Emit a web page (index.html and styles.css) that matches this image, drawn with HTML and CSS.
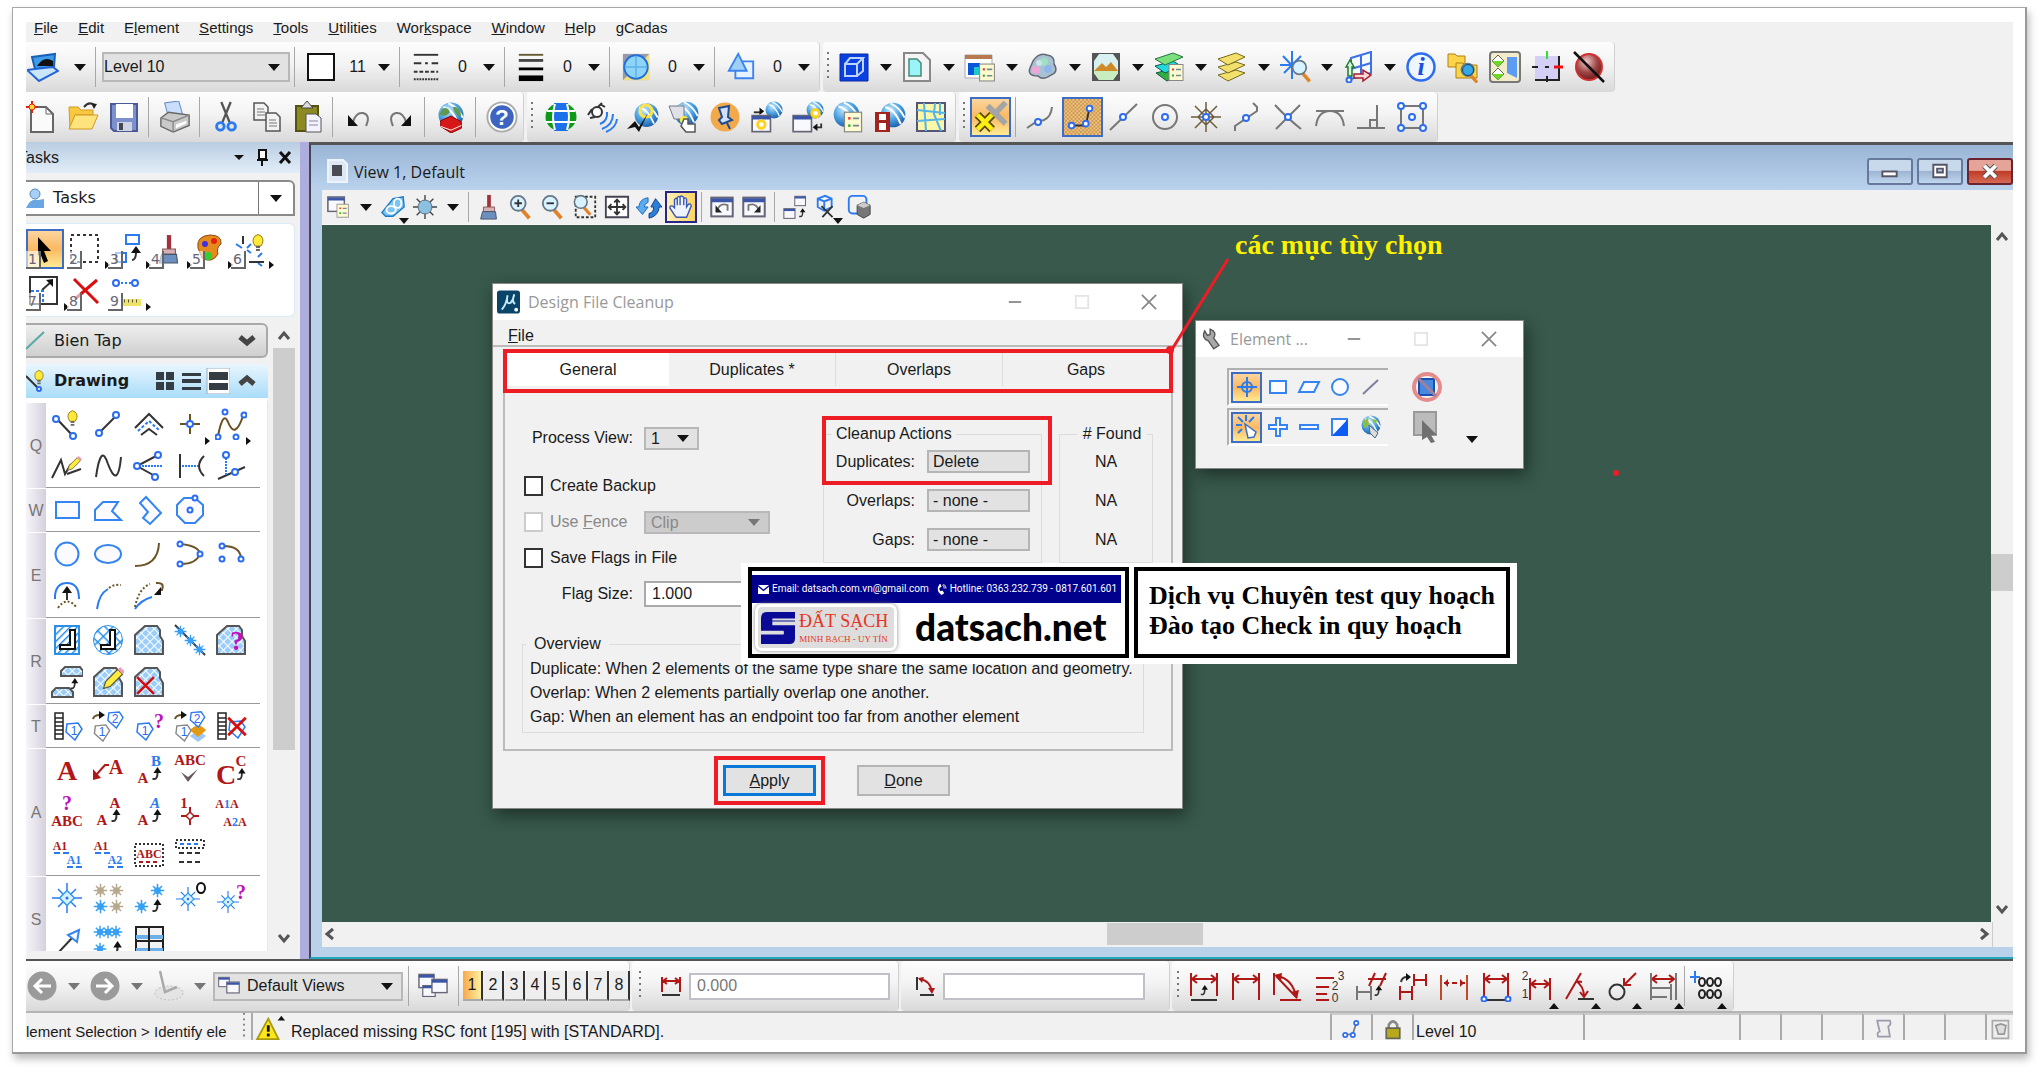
FILE: index.html
```html
<!DOCTYPE html>
<html lang="vi">
<head>
<meta charset="utf-8">
<title>View 1, Default</title>
<link rel="stylesheet" href="styles.css">
</head>
<body>
<svg class="sprite" aria-hidden="true">
  <defs>
    <linearGradient id="gold" x1="0" y1="0" x2="0" y2="1"><stop offset="0" stop-color="#fff3a8"/><stop offset="1" stop-color="#f6b73c"/></linearGradient>
    <radialGradient id="sea" cx=".4" cy=".3" r=".8"><stop offset="0" stop-color="#c8ecff"/><stop offset=".5" stop-color="#4aa0e0"/><stop offset="1" stop-color="#0f4f9c"/></radialGradient>
    <radialGradient id="ruby" cx=".4" cy=".3" r=".8"><stop offset="0" stop-color="#f3c9c9"/><stop offset=".5" stop-color="#a04848"/><stop offset="1" stop-color="#5e0f0f"/></radialGradient>
    <pattern id="hatch" width="6" height="6" patternUnits="userSpaceOnUse" patternTransform="rotate(45)"><rect width="6" height="6" fill="#9acdf9"/><path d="M0 0H6M0 0V6" stroke="#fff" stroke-width="2"/></pattern>
    <pattern id="hatch2" width="8" height="8" patternUnits="userSpaceOnUse" patternTransform="rotate(45)"><rect width="8" height="8" fill="#fff"/><path d="M0 0H8M0 0V8" stroke="#2a8fe8" stroke-width="3"/></pattern>
    <pattern id="hatch3" width="5" height="5" patternUnits="userSpaceOnUse" patternTransform="rotate(45)"><rect width="5" height="5" fill="#fff"/><path d="M0 0V5" stroke="#2a8fe8" stroke-width="3"/></pattern>
    <pattern id="dots" width="4" height="4" patternUnits="userSpaceOnUse"><circle cx="1" cy="1" r=".7" fill="#554"/><circle cx="3" cy="3" r=".7" fill="#554"/></pattern>
  </defs>
  <symbol id="globe" viewBox="0 0 20 20"><circle cx="10" cy="10" r="9.500" fill="url(#sea)"/><path d="M4 4Q11 5 16 17M8 1Q15 4 19 12" fill="none" stroke="#fff" stroke-width="1.500"/></symbol>
  <symbol id="star" viewBox="0 0 20 20"><path class="b thin" d="M10 0V20M0 10H20M4 4L16 16M16 4L4 16"/><path d="M10 5L15 10L10 15L5 10Z" fill="#d7f0ff" stroke="#2b9bf0"/><circle cx="10" cy="10" r="1" fill="#2b6cf0"/></symbol>
  <symbol id="burst" viewBox="0 0 20 20"><path d="M10 1V19M1 10H19M4 4L16 16M16 4L4 16" stroke="currentColor" stroke-width="2"/><circle cx="10" cy="10" r="4.500" fill="currentColor"/></symbol>
  <symbol id="list" viewBox="0 0 16 18"><rect x="1" y="1" width="14" height="16" fill="#fffbd0" stroke="#888"/><path d="M4 6H6" stroke="#e33" stroke-width="2"/><path d="M4 12H6" stroke="#3a3" stroke-width="2"/><path d="M8 6H13M8 12H13" stroke="#789" stroke-width="1.500"/></symbol>
  <symbol id="win" viewBox="0 0 18 16"><rect x="1" y="1" width="16" height="14" fill="#f8f8ff" stroke="#667" stroke-width="1.500"/><path d="M1 3H17" stroke="#3b56a8" stroke-width="3"/></symbol>
  <symbol id="cur" viewBox="0 0 12 14"><path class="k" d="M2 12H4Q7 12 7 5"/><path d="M7 0L11 6H3Z" fill="#111"/></symbol>
  <symbol id="bulb" viewBox="0 0 12 18"><path d="M3 12Q-1 6 3 2Q6-1 9 2Q13 6 9 12Z" fill="#ffe93b" stroke="#9a7c10"/><path d="M4 13H8M4 16H8" stroke="#666" stroke-width="2"/></symbol>
  <symbol id="pencil" viewBox="0 0 20 20"><path d="M2 18L4 12L14 2L18 6L8 16Z" fill="#ffec3d" stroke="#554"/><path d="M14 2L16 0L20 4L18 6Z" fill="#f29ab8"/></symbol>
  <symbol id="cross" viewBox="0 0 20 20"><path d="M2 2L18 18M18 2L2 18" stroke="#d40f0f" stroke-width="2.500"/></symbol>
  <symbol id="tag" viewBox="0 0 18 20"><path d="M2 3L13 2L17 8L10 19L1 11Z" fill="#fff" stroke="currentColor" stroke-width="1.500"/></symbol>
  <symbol id="ladder" viewBox="0 0 10 28"><path d="M1 1H9V27H1ZM1 6H9M1 10H9M1 14H9M1 18H9M1 22H9" fill="#fff" stroke="#222" stroke-width="1.500"/></symbol>
  <symbol id="lens" viewBox="0 0 28 28"><path d="M15 17L23 26" stroke="#e08228" stroke-width="4"/><circle cx="11" cy="10" r="8" fill="#d9f2ff" stroke="#678" stroke-width="2"/></symbol>
  <symbol id="brush" viewBox="0 0 28 28"><path d="M12 1H16V14H12Z" fill="#a3303a"/><path d="M8 14H20V19H8Z" fill="#d6b0b4" stroke="#855"/><path d="M7 19H21L22 27H5Z" fill="#6d8fc0" stroke="#456"/></symbol>
  <symbol id="grip" viewBox="0 0 4 30"><path d="M2 0V30" stroke="#777" stroke-width="2" stroke-dasharray="2 4"/></symbol>
</svg>

<main class="sheet">
<div class="app">
  <nav class="menubar">
    <a href="#"><u>F</u>ile</a><a href="#"><u>E</u>dit</a><a href="#">E<u>l</u>ement</a><a href="#"><u>S</u>ettings</a><a href="#"><u>T</u>ools</a><a href="#"><u>U</u>tilities</a><a href="#">Wor<u>k</u>space</a><a href="#"><u>W</u>indow</a><a href="#"><u>H</u>elp</a><a href="#">gCadas</a>
  </nav>

  <div class="toolrow">
    <div class="seg first">
      <button class="attr-icon" aria-label="Active level"><svg viewBox="0 0 32 32"><path d="M5 6L28 3L27 16L8 18Z" fill="#3d9be8" stroke="#175fb8" stroke-width="2"/><path d="M10 15Q17 4 26 10V15Z" fill="#111"/><path d="M0 19L12 30L31 20L26 16L8 18Z" fill="#cbe6fb" stroke="#2466d8" stroke-width="2"/></svg></button>
      <i class="caret wide"></i>
      <span class="sep"></span>
      <span class="select level"><select aria-label="Level"><option>Level 10</option></select></span>
      <span class="sep"></span>
      <div class="attr"><span class="swatch"></span><span>11</span><i class="caret"></i></div>
      <span class="sep"></span>
      <div class="attr"><svg viewBox="0 0 28 32"><path class="k" d="M1 3H27"/><path class="k" stroke-dasharray="8 4 3 4" d="M1 12H27"/><path class="k" stroke-dasharray="4 2" d="M1 21H27"/><path class="k" stroke-dasharray="2 1" d="M1 29H27"/></svg><span>0</span><i class="caret"></i></div>
      <span class="sep"></span>
      <div class="attr"><svg viewBox="0 0 28 32"><path d="M1 3H27" stroke="#665a30" stroke-width="2"/><path d="M1 9H27" stroke="#444" stroke-width="3"/><path d="M1 18H27" stroke="#000" stroke-width="3"/><path d="M1 28H27" stroke="#000" stroke-width="6"/></svg><span>0</span><i class="caret"></i></div>
      <span class="sep"></span>
      <div class="attr"><svg viewBox="0 0 28 32"><path d="M0 2H28V30H0Z" fill="#99a"/><path d="M28 2V30H0Z" fill="#f3df83"/><circle cx="14" cy="16" r="12.500" fill="#8ed4f8" stroke="#1c6fd8" stroke-width="2"/><path d="M14 4V28M2 16H26" stroke="#5cb0e8" stroke-width="1.500"/></svg><span>0</span><i class="caret"></i></div>
      <span class="sep"></span>
      <div class="attr"><svg viewBox="0 0 28 32"><path d="M12 10H27V28H8V20" fill="#e6f2ff" stroke="#3b83ee" stroke-width="2"/><path d="M11 2L20 20H1Z" fill="#9fd0fa" stroke="#3b83ee" stroke-width="2"/></svg><span>0</span><i class="caret"></i></div>
    </div>
    <div class="seg split">
      <svg class="grip"><use href="#grip"/></svg>
      <button aria-label="Models"><svg viewBox="0 0 32 32"><path d="M2 3H30V30H2Z" fill="#0a3fe0" stroke="#0828a0"/><path d="M7 13H19V25H7ZM7 13L12 7H25L19 13M25 7V20L19 25" fill="none" stroke="#bcd4ff" stroke-width="2"/></svg></button><i class="caret"></i>
      <button aria-label="References"><svg viewBox="0 0 32 32"><path d="M3 2H22L29 9V30H3Z" fill="#f4f4f4" stroke="#888" stroke-width="2"/><path d="M8 8H16L20 12V25H8Z" fill="#9af4f8" stroke="#487" stroke-width="1.500"/></svg></button><i class="caret"></i>
      <button aria-label="Raster manager"><svg viewBox="0 0 32 32"><path d="M1 4H28V27H1Z" fill="#fff" stroke="#aaa"/><path d="M1 4H28V8H1Z" fill="#b77a50"/><path d="M4 12H16V24H4Z" fill="#0a55d8"/><path d="M10 16H17V24H10Z" fill="#1cc8c8"/><use href="#list" x="14" y="12" width="18" height="19"/></svg></button><i class="caret"></i>
      <button aria-label="Point clouds"><svg viewBox="0 0 32 32"><path d="M6 10Q12 1 20 4Q28 5 27 13Q32 21 24 24Q16 30 11 25Q0 25 3 17Z" fill="#a7c3cf" stroke="#667" stroke-width="1.500"/><circle cx="9" cy="19" r="4" fill="#f0a5d8"/><circle cx="17" cy="11" r="4" fill="#9fe0c0"/><circle cx="21" cy="18" r="4" fill="#8fb4ee"/><circle cx="12" cy="12" r="3" fill="#cfe2ee"/></svg></button><i class="caret"></i>
      <button aria-label="Saved views"><svg viewBox="0 0 32 32"><path d="M2 2H30V30H2Z" fill="#555"/><path d="M9 3H23L28 10V22L23 29H9L4 22V10Z" fill="#d8f0f0"/><path d="M4 20L12 12L16 16L21 11L28 20Z" fill="#d08a28"/><path d="M4 20H28V22L23 29H9L4 22Z" fill="#c8eec0"/></svg></button><i class="caret"></i>
      <button aria-label="Level manager"><svg viewBox="0 0 32 32"><path d="M3 22L22 17L30 22L14 30Z" fill="#30b040" stroke="#154"/><path d="M2 15L20 10L28 15L12 22Z" fill="#20d8e0" stroke="#154"/><path d="M2 8L20 2L30 6L12 14Z" fill="#7be07a" stroke="#274"/><use href="#list" x="15" y="12" width="16" height="19"/></svg></button><i class="caret"></i>
      <button aria-label="Level display"><svg viewBox="0 0 32 32"><g fill="#f2e06a" stroke="#776a20" stroke-width="1"><path d="M2 24L20 19L29 22L12 30Z"/><path d="M2 16L20 11L29 14L12 22Z"/><path d="M2 8L20 2L29 6L12 14Z"/></g></svg></button><i class="caret"></i>
      <button aria-label="Cell library"><svg viewBox="0 0 32 32"><path class="b" d="M13 0V28M1 14H20M4 5L20 22M22 5L5 22"/><use href="#lens" x="11" y="8" width="24" height="24"/></svg></button><i class="caret"></i>
      <button aria-label="Auxiliary coordinates"><svg viewBox="0 0 32 32"><path d="M9 7L29 1V22L9 28ZM9 18L29 12M19 4V25" fill="#f6faff" stroke="#3b70e8" stroke-width="2"/><path d="M4 16L8 9L12 16H10V25H6V16Z" fill="#d9f5d9" stroke="#1f7a30" stroke-width="1.500"/><path d="M12 23H21V19L29 24L21 30V27H12Z" fill="#ffd9d9" stroke="#a02030" stroke-width="1.500"/><circle class="n" cx="7" cy="29" r="2.500"/></svg></button><i class="caret"></i>
      <button aria-label="Element information"><svg viewBox="0 0 32 32"><circle cx="16" cy="16" r="13.500" fill="#eef6ff" stroke="#2b6cf0" stroke-width="2.500"/><text class="ico info" x="16" y="24">i</text></svg></button>
      <button aria-label="Project explorer"><svg viewBox="0 0 32 32"><g fill="#fbd44a" stroke="#b08010"><path d="M1 3H8L10 5H18V16H1Z"/><path d="M9 12H16L18 14H30V27H9Z"/></g><use href="#lens" x="12" y="11" width="22" height="22"/><circle cx="21" cy="19" r="5.500" fill="#36a8e8" stroke="#146"/></svg></button>
      <button aria-label="Toggle dialogs"><svg viewBox="0 0 32 32"><rect x="1" y="1" width="30" height="30" rx="3" fill="#f3eccb" stroke="#777" stroke-width="2"/><path d="M9 4L15 10L9 16L3 10ZM9 17L15 23L9 29L3 23Z" fill="#fff" stroke="#665"/><path d="M3 10H15L9 16ZM3 23H15L9 29Z" fill="#70d828"/><path d="M18 6H28V27L18 22Z" fill="#5e9cf4"/></svg></button>
      <button aria-label="AccuDraw"><svg viewBox="0 0 32 32"><path d="M4 5H28V29H4Z" fill="#d4cff4"/><path d="M28 5V29H4" fill="none" stroke="#222" stroke-width="2"/><path d="M16 0V8" stroke="#32e032" stroke-width="2"/><path d="M23 16H32" stroke="#f01010" stroke-width="3"/><path d="M1 16H7M14 16H18M16 25V31" stroke="#222" stroke-width="2"/></svg></button>
      <button aria-label="Render"><svg viewBox="0 0 32 32"><circle cx="16" cy="16" r="13" fill="url(#ruby)" stroke="#d03030" stroke-width="2"/><path d="M1 1L31 31" stroke="#111" stroke-width="2.500"/></svg></button>
    </div>
  </div>

  <div class="toolrow">
    <div class="seg first std">
      <button aria-label="New"><svg viewBox="0 0 32 32"><path d="M5 6H20L27 13V31H5Z" fill="#fafafa" stroke="#666" stroke-width="2"/><path d="M20 6V13H27" fill="none" stroke="#666"/><path d="M6 0V12M0 6H12" stroke="#e02010" stroke-width="2"/><circle cx="6" cy="6" r="3" fill="#ffd83a" stroke="#e02010"/></svg></button>
      <button aria-label="Open"><svg viewBox="0 0 32 32"><path d="M2 6H11L14 9H26V14H8L3 28Z" fill="#f7c840" stroke="#d09a20"/><path d="M8 14H31L25 28H2Z" fill="#ffe37c" stroke="#d09a20"/><path d="M17 6Q22 0 27 4" class="k"/><path d="M24 2L30 3L27 8Z" fill="#222"/></svg></button>
      <button aria-label="Save"><svg viewBox="0 0 32 32"><path d="M3 3H29V30H6L3 27Z" fill="#7b90cc" stroke="#4b5a96" stroke-width="2"/><path d="M8 3H25V17H8Z" fill="#fff"/><path d="M9 21H24V30H9Z" fill="#d0d4e2"/><path d="M11 22H15V29H11Z" fill="#445"/></svg></button>
      <span class="sep"></span>
      <button aria-label="Print"><svg viewBox="0 0 32 34"><path d="M5 2L20 0L24 14L9 17Z" fill="#c8defa" stroke="#5580c0"/><path d="M1 18L9 12L31 15V26L14 33L1 27Z" fill="#c9c9c9" stroke="#666" stroke-width="1.500"/><path d="M1 18L14 22L31 15M14 22V33" fill="none" stroke="#888" stroke-width="1.500"/><path d="M17 25L28 21V24L17 29Z" fill="#fff"/></svg></button>
      <span class="sep"></span>
      <button aria-label="Cut"><svg viewBox="0 0 32 34"><path d="M11 1L20 23M21 1L12 23" stroke="#555" stroke-width="2.500"/><circle cx="10" cy="27" r="4" class="b w3"/><circle cx="22" cy="27" r="4" class="b w3"/></svg></button>
      <button aria-label="Copy"><svg viewBox="0 0 32 32"><g fill="#f2f2f2" stroke="#555" stroke-width="1.500"><path d="M3 2H13L17 6V19H3Z"/><path d="M15 12H25L29 16V30H15Z"/></g><path d="M6 8H13M6 11H14M6 14H14M18 19H25M18 22H26M18 25H26" stroke="#777"/></svg></button>
      <button aria-label="Paste"><svg viewBox="0 0 32 32"><path d="M4 5H26V30H4Z" fill="#8c8a20" stroke="#555210" stroke-width="2"/><path d="M9 7L15 0L21 7Z" fill="#ddd" stroke="#444"/><path d="M14 13H24L29 17V31H14Z" fill="#f4f2ff" stroke="#555"/><path d="M17 20H26M17 24H26" stroke="#88a"/></svg></button>
      <span class="sep"></span>
      <button aria-label="Undo"><svg viewBox="0 0 32 32"><path d="M10 21Q13 11 20 12Q28 14 23 25" fill="none" stroke="#777" stroke-width="2"/><path d="M5 14V25H15Z" fill="#111"/></svg></button>
      <button aria-label="Redo"><svg viewBox="0 0 32 32"><path d="M22 21Q19 11 12 12Q4 14 9 25" fill="none" stroke="#777" stroke-width="2"/><path d="M27 14V25H17Z" fill="#111"/></svg></button>
      <span class="sep"></span>
      <button aria-label="Resources"><svg viewBox="0 0 32 34"><use href="#globe" x="2" y="1" width="28" height="28"/><path d="M6 9Q12 5 15 12Q10 18 4 14ZM18 6Q26 6 27 16Q20 16 18 6Z" fill="#5f9a50"/><path d="M5 21L16 16L27 22V29L16 34L5 27Z" fill="#d81818" stroke="#800"/><path d="M5 27L16 31L27 26" fill="none" stroke="#fff"/></svg></button>
      <span class="sep"></span>
      <button aria-label="Help"><svg viewBox="0 0 34 34"><circle cx="17" cy="17" r="15.500" fill="#fff" stroke="#aaa" stroke-width="2"/><circle cx="17" cy="17" r="12.500" fill="#3c64c0"/><text class="ico help" x="17" y="25">?</text></svg></button>
    </div>
    <div class="seg geo">
      <svg class="grip"><use href="#grip"/></svg>
      <button aria-label="Geographic system"><svg viewBox="0 0 32 32"><ellipse cx="16" cy="16" rx="15.500" ry="14" fill="#0c9a18"/><path d="M9 2H23V30H9Z" fill="#1c70e8"/><path d="M2 10H30M1 21H31M10 3Q6 16 10 29M22 3Q26 16 22 29" fill="none" stroke="#fff" stroke-width="2"/></svg></button>
      <button aria-label="GPS"><svg viewBox="0 0 32 32"><circle cx="11" cy="11" r="5" fill="#fff" stroke="#333" stroke-width="2"/><path class="k" d="M2 14L6 8M14 3L19 6M4 17L9 16M16 2L12 6"/><path class="b" d="M14 23Q22 20 21 11M16 28Q27 24 27 13M20 31Q30 27 31 18"/></svg></button>
      <button aria-label="Place on globe"><svg viewBox="0 0 32 32"><use href="#globe" x="7" y="1" width="25" height="26"/><circle cx="19" cy="10" r="6" fill="none" stroke="#ffe34a" stroke-width="3"/><path d="M0 28L8 20L12 26L21 12L12 31L8 26Z" fill="#111"/></svg></button>
      <button aria-label="Follow globe"><svg viewBox="0 0 32 32"><use href="#globe" x="6" y="0" width="25" height="25"/><path d="M1 5H16V18H6Z" fill="#e0e0e8" stroke="#778"/><circle cx="16" cy="19" r="4" fill="#ffe93b"/><path d="M16 18H20V23H27V31H18L13 25Z" fill="#fff" stroke="#555" stroke-width="1.500"/></svg></button>
      <button aria-label="Placemark"><svg viewBox="0 0 32 32"><circle cx="16" cy="16" r="14.500" fill="#f2a94a"/><path d="M10 7L20 5L19 16L23 19L13 23L10 19L13 16Z" fill="#cfe0f8" stroke="#204a90" stroke-width="2"/><path d="M18 22L21 28" stroke="#204a90" stroke-width="2"/></svg></button>
      <button aria-label="Capture image"><svg viewBox="0 0 34 34"><use href="#globe" x="15" y="0" width="19" height="19"/><use href="#win" x="0" y="14" width="22" height="20"/><circle cx="11" cy="25" r="4" fill="#fff" stroke="#ffd21c" stroke-width="3"/><path d="M3 12H10" class="k"/><path d="M9 7L14 11L9 15Z" fill="#111"/></svg></button>
      <button aria-label="Import image"><svg viewBox="0 0 34 34"><use href="#globe" x="15" y="0" width="19" height="19"/><use href="#win" x="0" y="14" width="22" height="20"/><circle cx="25" cy="13" r="4" fill="#fff" stroke="#ffd21c" stroke-width="3"/><path d="M26 28H31V24" class="k"/><path d="M27 24L22 28L27 32Z" fill="#111"/></svg></button>
      <button aria-label="Globe settings"><svg viewBox="0 0 32 32"><use href="#globe" x="0" y="0" width="27" height="27"/><use href="#list" x="9" y="10" width="22" height="22"/></svg></button>
      <button aria-label="Play tour"><svg viewBox="0 0 32 32"><use href="#globe" x="6" y="0" width="26" height="28"/><path d="M1 11H16V31H1Z" fill="#a2241c"/><path d="M5 13H12V19H5ZM5 22H12V29H5Z" fill="#fff"/></svg></button>
      <button aria-label="Street map"><svg viewBox="0 0 32 32"><path d="M2 2H30V30H2Z" fill="#fbf7a8" stroke="#557" stroke-width="2"/><path d="M2 9L30 12M2 20L30 18M9 2L11 30M20 2L19 13L26 30M25 2V14" fill="none" stroke="#56b4e8" stroke-width="2"/></svg></button>
    </div>
    <div class="seg snap">
      <svg class="grip"><use href="#grip"/></svg>
      <button class="on" aria-label="AccuSnap"><svg viewBox="0 0 32 32"><path d="M13 6L29 22M29 3L13 20" stroke="#a5a5a5" stroke-width="5"/><path d="M4 14L17 27M17 14L4 27" stroke="#554a00" stroke-width="7"/><path d="M4 14L17 27M17 14L4 27" stroke="#ffef10" stroke-width="4"/></svg></button>
      <span class="sep"></span>
      <button aria-label="Nearest"><svg viewBox="0 0 32 32"><path class="g" d="M2 27L11 21L19 19Q26 16 27 6"/><circle class="n" cx="13" cy="21" r="3"/></svg></button>
      <button class="on" aria-label="Keypoint"><svg viewBox="0 0 40 38"><path d="M0 0H40V38H0Z" fill="#fbc070"/><path d="M0 0H40V38H0Z" fill="url(#dots)"/><path class="k" d="M9 28H24L28 9"/><circle class="n" cx="9" cy="28" r="3"/><circle class="n" cx="24" cy="26" r="3"/><circle class="n" cx="28" cy="10" r="3"/></svg></button>
      <button aria-label="Midpoint"><svg viewBox="0 0 32 32"><path class="g" d="M3 29L30 3"/><circle class="n" cx="16" cy="16" r="3"/></svg></button>
      <button aria-label="Center"><svg viewBox="0 0 32 32"><circle class="g" cx="16" cy="16" r="12"/><circle class="n" cx="16" cy="16" r="3"/></svg></button>
      <button aria-label="Origin"><svg viewBox="0 0 32 32"><path d="M16 1V31M1 16H31M5 5L27 27M27 5L5 27M16 8L24 16L16 24L8 16Z" fill="none" stroke="#6b5c3c" stroke-width="1.500"/><circle class="n" cx="16" cy="16" r="3"/></svg></button>
      <button aria-label="Bisector"><svg viewBox="0 0 32 32"><path class="g" d="M4 30V25L26 10V6L22 2"/><circle class="n" cx="15" cy="17" r="3"/></svg></button>
      <button aria-label="Intersection"><svg viewBox="0 0 32 32"><path class="g" d="M3 4Q14 16 29 28M28 4L4 28"/><circle class="n" cx="16" cy="16" r="3"/></svg></button>
      <button aria-label="Tangent"><svg viewBox="0 0 32 32"><path class="g" d="M2 10H30M2 25Q4 10 16 10Q28 10 30 25"/></svg></button>
      <button aria-label="Perpendicular"><svg viewBox="0 0 32 32"><path class="g" d="M2 27H30M22 4V27M15 27V19H22"/></svg></button>
      <button aria-label="Multi-snap"><svg viewBox="0 0 32 32"><path class="g" d="M5 5H27V27H5Z"/><circle class="n" cx="5" cy="5" r="3"/><circle class="n" cx="27" cy="5" r="3"/><circle class="n" cx="5" cy="27" r="3"/><circle class="n" cx="27" cy="27" r="3"/><circle class="n" cx="16" cy="16" r="3"/></svg></button>
    </div>
  </div>

  <div class="work">
    <aside class="tasks">
      <header class="dock"><span class="cut">Tasks</span><i class="caret small"></i>
        <button aria-label="Pin"><svg viewBox="0 0 16 20"><path d="M5 2H12V11H5ZM3 12H14M8 12V18" fill="#fff" stroke="#111" stroke-width="2"/></svg></button>
        <button aria-label="Close"><svg viewBox="0 0 16 20"><path d="M3 4L13 15M13 4L3 15" stroke="#111" stroke-width="3"/></svg></button>
      </header>
      <div class="taskbox"><svg viewBox="0 0 20 22"><circle cx="9" cy="7" r="5" fill="#a8d0f4" stroke="#5588bb"/><path d="M0 21Q4 11 12 13L18 12V21Z" fill="#6aa6e4"/></svg><span>Tasks</span><button aria-label="Choose task"><i class="caret"></i></button></div>

      <div class="main-tools">
        <button class="on" aria-label="Element selection"><svg viewBox="0 0 38 38"><path d="M12 7L25 21H18L22 31L18 33L14 23L12 26Z" fill="#000"/></svg><b>1</b></button>
        <button aria-label="Fence"><svg viewBox="0 0 38 38"><path class="k" stroke-dasharray="3 3" d="M4 5H31V32H4Z"/></svg><b>2</b><i></i></button>
        <button aria-label="Manipulate"><svg viewBox="0 0 38 38"><path class="b" d="M18 5H31V14H18ZM8 23H18V32H8Z"/><path class="k" d="M24 30Q28 30 28 22"/><path d="M28 16L33 23H23Z" fill="#111"/></svg><b>3</b><i></i></button>
        <button aria-label="Change attributes"><svg viewBox="0 0 38 38"><use href="#brush" x="5" y="3" width="30" height="32"/></svg><b>4</b><i></i></button>
        <button aria-label="View attributes"><svg viewBox="0 0 38 38"><path d="M8 18Q6 6 20 5Q32 5 31 14Q26 18 28 24Q22 34 12 28Z" fill="#e58a1c" stroke="#8a4a10"/><circle cx="15" cy="14" r="3" fill="#4030e0"/><circle cx="24" cy="11" r="3" fill="#e82010"/><circle cx="18" cy="26" r="4" fill="#30d030"/></svg><b>5</b><i></i></button>
        <button aria-label="Groups"><svg viewBox="0 0 38 38"><path class="b" d="M5 14L11 18M20 14L16 18M20 23L16 20M31 23L27 27M31 36L27 33"/><path class="k" d="M12 6V14M18 32H33"/><use href="#bulb" x="21" y="3" width="12" height="20"/></svg><b>6</b><i></i></button>
        <button aria-label="Modify"><svg viewBox="0 0 38 38"><path class="k" d="M4 5H31V32H4ZM16 18L25 10"/><path d="M27 7V15L20 8Z" fill="#111"/><path class="b" stroke-dasharray="3 2" d="M5 19H17V31"/></svg><b>7</b><i></i></button>
        <button aria-label="Delete element"><svg viewBox="0 0 38 38"><path d="M7 7L31 31M30 8L8 27" stroke="#d80f0f" stroke-width="3"/></svg><b>8</b></button>
        <button aria-label="Measure"><svg viewBox="0 0 38 38"><path class="b" stroke-dasharray="2 2" d="M9 11H28"/><circle class="n" cx="8" cy="11" r="3"/><circle class="n" cx="27" cy="11" r="3"/><path d="M14 27H33V34H14Z" fill="#f0e468"/><path d="M16 29H32" stroke="#554" stroke-width="3" stroke-dasharray="1 3"/></svg><b>9</b><i></i></button>
      </div>

      <div class="lists">
        <div class="col">
          <button class="bar"><svg viewBox="0 0 20 22"><path d="M0 19L18 2" stroke="#58aaa8" stroke-width="2"/></svg><span>Bien Tap</span><svg class="chev" viewBox="0 0 18 14"><path d="M2 3L9 9L16 3" fill="none" stroke="#444" stroke-width="5"/></svg></button>
          <div class="bar open"><svg viewBox="0 0 20 22"><path class="k" d="M0 6L12 18"/><circle class="n" cx="13" cy="19" r="2"/><use href="#bulb" x="8" y="0" width="10" height="15"/></svg><strong>Drawing</strong>
            <svg class="modes" viewBox="0 0 76 26"><path d="M2 4H10V12H2ZM12 4H20V12H12ZM2 14H10V22H2ZM12 14H20V22H12ZM28 5H47V8H28ZM28 11H47V15H28ZM28 19H47V22H28Z" fill="#343c44"/><path d="M53 0H76V26H53Z" fill="#fff" stroke="#9ab"/><path d="M55 4H74V12H55ZM55 15H74V22H55Z" fill="#343c44"/></svg>
            <svg class="chev" viewBox="0 0 18 14"><path d="M2 10L9 4L16 10" fill="none" stroke="#444" stroke-width="5"/></svg></div>
          <div class="sections">
            <section><h3>Q</h3><div class="tools">
              <button aria-label="SmartLine"><svg viewBox="0 0 32 32"><path class="k" d="M6 11L22 28"/><circle class="n" cx="5" cy="11" r="3"/><circle class="n" cx="22" cy="28" r="3"/><use href="#bulb" x="16" y="1" width="11" height="19"/></svg></button>
              <button aria-label="Line"><svg viewBox="0 0 32 32"><path class="k" d="M7 25L24 8"/><circle class="n" cx="7" cy="25" r="3"/><circle class="n" cx="24" cy="7" r="3"/></svg></button>
              <button aria-label="Multi-line"><svg viewBox="0 0 32 32"><path class="k" d="M2 20L16 6L30 20M8 27L16 21L24 27"/><path class="b" stroke-dasharray="3 2" d="M5 23L16 13L27 23"/></svg></button>
              <button class="more" aria-label="Point"><svg viewBox="0 0 32 32"><path d="M16 6V26M6 16H26" stroke="#6b5020" stroke-width="2"/><circle class="n" cx="16" cy="16" r="3"/></svg></button>
              <button class="more" aria-label="Curve"><svg viewBox="0 0 32 32"><path d="M3 28Q8 2 13 14Q20 32 28 8" fill="none" stroke="#6b5020" stroke-width="2"/><circle class="n" cx="3" cy="29" r="2.500"/><circle class="n" cx="10" cy="4" r="2.500"/><circle class="n" cx="21" cy="29" r="2.500"/><circle class="n" cx="29" cy="7" r="2.500"/></svg></button>
              <button aria-label="Sketch"><svg viewBox="0 0 32 32"><path class="k" d="M1 28L10 10L14 24L20 14M16 24L30 19"/><use href="#pencil" x="15" y="4" width="16" height="20"/></svg></button>
              <button aria-label="Stream curve"><svg viewBox="0 0 32 32"><path class="k" d="M4 27Q9-8 16 14Q26 40 29 7"/></svg></button>
              <button aria-label="Angle bisector"><svg viewBox="0 0 32 32"><path class="k" d="M25 5L4 16L22 26"/><path class="b" stroke-dasharray="2 1" d="M6 16H30"/><circle class="n" cx="25" cy="5" r="3"/><circle class="n" cx="4" cy="16" r="3"/><circle class="n" cx="22" cy="27" r="3"/></svg></button>
              <button aria-label="Minimum distance"><svg viewBox="0 0 32 32"><path class="k" d="M6 4V28M30 6Q20 16 30 26"/><path class="b" stroke-dasharray="2 1" d="M8 16H24"/></svg></button>
              <button aria-label="Line at angle"><svg viewBox="0 0 32 32"><path class="k" d="M3 29L30 17"/><path class="b" stroke-dasharray="2 1" d="M11 8V25"/><circle class="n" cx="11" cy="5" r="3"/><circle class="n" cx="20" cy="22" r="3"/></svg></button>
            </div></section>
            <section><h3>W</h3><div class="tools">
              <button aria-label="Block"><svg viewBox="0 0 32 32"><path class="s" d="M5 8H28V24H5Z"/></svg></button>
              <button aria-label="Shape"><svg viewBox="0 0 32 32"><path class="s" d="M3 26V16L11 8H26L20 17L29 26Z"/></svg></button>
              <button aria-label="Orthogonal shape"><svg viewBox="0 0 32 32"><path class="s" d="M7 9L13 3L28 19L17 30L10 24L15 18Z"/></svg></button>
              <button aria-label="Regular polygon"><svg viewBox="0 0 32 32"><path class="s" d="M10 4H21L29 11V21L21 29H11L3 21V11Z"/><circle class="n" cx="21" cy="4" r="2.500"/><circle class="n" cx="16" cy="16" r="2.500"/></svg></button>
            </div></section>
            <section><h3>E</h3><div class="tools">
              <button aria-label="Circle"><svg viewBox="0 0 32 32"><circle class="s" cx="16" cy="16" r="11.500"/></svg></button>
              <button aria-label="Ellipse"><svg viewBox="0 0 32 32"><ellipse class="s" cx="16" cy="16" rx="13" ry="9"/></svg></button>
              <button aria-label="Arc"><svg viewBox="0 0 32 32"><path class="o" d="M2 28Q25 28 26 5"/></svg></button>
              <button aria-label="Half ellipse"><svg viewBox="0 0 32 32"><path class="o" d="M7 6Q25 8 26 16Q22 26 7 26"/><circle class="n" cx="6" cy="6" r="2.500"/><circle class="n" cx="26" cy="16" r="2.500"/><circle class="n" cx="6" cy="26" r="2.500"/></svg></button>
              <button aria-label="Quarter ellipse"><svg viewBox="0 0 32 32"><path class="o" d="M8 8Q25 8 26 20"/><circle class="n" cx="7" cy="8" r="2.500"/><circle class="n" cx="7" cy="21" r="2.500"/><circle class="n" cx="26" cy="21" r="2.500"/></svg></button>
              <button aria-label="Modify arc radius"><svg viewBox="0 0 32 32"><path class="b" d="M4 19V16Q5 3 16 3Q28 3 28 19"/><path class="k" d="M16 20V12"/><path d="M16 6L21 13H11Z" fill="#111"/><path class="o" stroke-dasharray="2 2" d="M7 28Q16 15 26 28"/></svg></button>
              <button aria-label="Modify arc angle"><svg viewBox="0 0 32 32"><path class="b" d="M5 29Q7 14 16 9"/><path class="o" stroke-dasharray="2 2" d="M17 8Q22 4 29 5"/></svg></button>
              <button aria-label="Modify arc axis"><svg viewBox="0 0 32 32"><path class="b" d="M2 29Q8 20 19 17"/><path class="o" stroke-dasharray="2 2" d="M2 27Q6 8 17 4"/><path class="o" d="M23 3Q32 2 29 10H26"/><path d="M28 7V15H21Z" fill="#111"/></svg></button>
            </div></section>
            <section><h3>R</h3><div class="tools">
              <button aria-label="Hatch area"><svg viewBox="0 0 32 32"><path d="M4 2H28V30H4Z" fill="url(#hatch3)" stroke="#2a8fe8" stroke-width="2"/><path d="M19 6H24V25H9V21H19Z" fill="#fff" stroke="#111" stroke-width="2"/></svg></button>
              <button aria-label="Crosshatch area"><svg viewBox="0 0 32 32"><circle cx="16" cy="16" r="14.500" fill="url(#hatch2)" stroke="#2a8fe8"/><path d="M18 6H23V25H9V21H18Z" fill="#fff" stroke="#111" stroke-width="2"/></svg></button>
              <button aria-label="Pattern area"><svg viewBox="0 0 32 32"><path class="h" d="M2 30V11L12 2H24L27 6V12L30 17V30Z"/></svg></button>
              <button aria-label="Linear pattern"><svg viewBox="0 0 32 32"><path class="k" d="M1 1L31 31"/><g color="#35a0f4"><use href="#burst" x="0" y="1" width="13" height="13"/><use href="#burst" x="10" y="10" width="13" height="13"/><use href="#burst" x="19" y="19" width="13" height="13"/></g></svg></button>
              <button aria-label="Show pattern attributes"><svg viewBox="0 0 32 32"><path class="h" d="M2 30V11L12 2H24L27 6V12L30 17V30Z"/><text class="ico mag big" x="22" y="26">?</text></svg></button>
              <button aria-label="Match pattern attributes"><svg viewBox="0 0 32 32"><path class="h" d="M10 10V5L14 1H29L32 5V10ZM1 31V26L5 22H18L22 26V31Z"/><use href="#cur" x="17" y="12" width="12" height="12"/></svg></button>
              <button aria-label="Change pattern"><svg viewBox="0 0 32 32"><path class="h" d="M2 30V11L12 2H24L27 6V12L30 17V30Z"/><use href="#pencil" x="9" y="0" width="24" height="26"/></svg></button>
              <button aria-label="Delete pattern"><svg viewBox="0 0 32 32"><path class="h" d="M2 30V11L12 2H24L27 6V12L30 17V30Z"/><use href="#cross" x="2" y="9" width="21" height="21"/></svg></button>
            </div></section>
            <section><h3>T</h3><div class="tools">
              <button aria-label="Attach tags"><svg viewBox="0 0 32 32"><use href="#ladder" x="3" y="2" width="10" height="28"/><g color="#2b7bf0"><use href="#tag" x="14" y="11" width="18" height="20"/></g><text class="ico blue" x="23" y="25">1</text></svg></button>
              <button aria-label="Change tags"><svg viewBox="0 0 32 32"><g color="#888"><use href="#tag" x="1" y="13" width="18" height="19"/></g><g color="#2b7bf0"><use href="#tag" x="15" y="0" width="17" height="19"/></g><text class="ico blue" x="23" y="13">2</text><text class="ico blue" x="10" y="26">1</text><path class="o" d="M1 9Q2 5 8 5"/><path d="M7 1L13 5L7 9Z" fill="#111"/></svg></button>
              <button aria-label="Review tags"><svg viewBox="0 0 32 32"><g color="#2b7bf0"><use href="#tag" x="3" y="11" width="18" height="20"/></g><text class="ico blue" x="12" y="25">1</text><text class="ico mag" x="26" y="18">?</text></svg></button>
              <button aria-label="Edit tags"><svg viewBox="0 0 32 32"><path d="M16 20L24 14L32 20L24 27Z" fill="#e39a10"/><path d="M16 26L24 20L32 26L24 32Z" fill="#9cc8fa"/><path d="M16 20L24 14L32 20L24 27Z" fill="#e39a10"/><g color="#888"><use href="#tag" x="1" y="13" width="17" height="19"/></g><g color="#2b7bf0"><use href="#tag" x="15" y="0" width="17" height="18"/></g><text class="ico blue" x="23" y="13">2</text><text class="ico blue" x="10" y="26">1</text><path class="o" d="M1 9Q2 5 8 5"/><path d="M7 1L13 5L7 9Z" fill="#111"/></svg></button>
              <button aria-label="Delete tags"><svg viewBox="0 0 32 32"><use href="#ladder" x="2" y="2" width="10" height="28"/><g color="#2b7bf0"><use href="#tag" x="13" y="9" width="18" height="20"/></g><use href="#cross" x="11" y="5" width="22" height="23"/></svg></button>
            </div></section>
            <section><h3>A</h3><div class="tools">
              <button aria-label="Place text"><svg viewBox="0 0 32 32"><text class="ico red xl" x="16" y="26">A</text></svg></button>
              <button aria-label="Place note"><svg viewBox="0 0 32 32"><text class="ico red big" x="24" y="20">A</text><path class="r" d="M17 11H13L4 21"/><path d="M1 26V15L9 24Z" fill="#b01818"/></svg></button>
              <button aria-label="Edit text"><svg viewBox="0 0 32 32"><text class="ico red" x="10" y="29">A</text><text class="ico blue2" x="23" y="12">B</text><use href="#cur" x="17" y="13" width="13" height="14"/></svg></button>
              <button aria-label="Spell checker"><svg viewBox="0 0 32 32"><text class="ico red" x="16" y="11">ABC</text><path d="M7 18L14 28L24 15L14 23Z" fill="#6c5a5a"/></svg></button>
              <button aria-label="Text case"><svg viewBox="0 0 32 32"><text class="ico red xl" x="11" y="30">C</text><text class="ico red" x="26" y="12">C</text><use href="#cur" x="20" y="14" width="12" height="13"/></svg></button>
              <button aria-label="Text attributes"><svg viewBox="0 0 32 32"><text class="ico mag" x="16" y="14">?</text><text class="ico red" x="16" y="30">ABC</text></svg></button>
              <button aria-label="Match text"><svg viewBox="0 0 32 32"><text class="ico red" x="10" y="29">A</text><text class="ico red" x="23" y="12">A</text><use href="#cur" x="17" y="13" width="13" height="14"/></svg></button>
              <button aria-label="Change text attributes"><svg viewBox="0 0 32 32"><text class="ico red" x="10" y="29">A</text><text class="ico blue2 it" x="22" y="12">A</text><use href="#cur" x="17" y="13" width="13" height="14"/></svg></button>
              <button aria-label="Place text node"><svg viewBox="0 0 32 32"><text class="ico red" x="10" y="12">1</text><path class="r" d="M16 11V29M7 20H25"/><path d="M16 16L20 20L16 24L12 20Z" fill="#fff" stroke="#b01818" stroke-width="1.500"/></svg></button>
              <button aria-label="Copy and increment text"><svg viewBox="0 0 32 32"><text class="ico red sm" x="12" y="12">A<tspan class="blue2">1</tspan>A</text><text class="ico red sm" x="20" y="30">A<tspan class="blue2">2</tspan>A</text></svg></button>
              <button aria-label="Copy enter data"><svg viewBox="0 0 32 32"><text class="ico red sm" x="9" y="12">A1</text><text class="ico blue2 sm" x="23" y="26">A1</text><path class="b" stroke-dasharray="6 3" d="M3 15H18M16 29H31"/></svg></button>
              <button aria-label="Increment enter data"><svg viewBox="0 0 32 32"><text class="ico red sm" x="9" y="12">A1</text><text class="ico blue2 sm" x="23" y="26">A2</text><path class="b" stroke-dasharray="6 3" d="M3 15H18M16 29H31"/></svg></button>
              <button aria-label="Fill in field"><svg viewBox="0 0 32 32"><path class="k" stroke-dasharray="2 2" d="M2 6H30V28H2Z"/><text class="ico red sm" x="16" y="20">ABC</text><path class="r" stroke-dasharray="4 3" d="M6 24H27"/></svg></button>
              <button aria-label="Enter data fields"><svg viewBox="0 0 32 32"><path class="k" stroke-dasharray="2 2" d="M2 2H30V10H2Z"/><path class="b" stroke-dasharray="4 3" d="M6 6H27"/><path class="k" stroke-dasharray="5 3" d="M5 15H27M5 24H27"/></svg></button>
            </div></section>
            <section><h3>S</h3><div class="tools">
              <button aria-label="Place cell"><svg viewBox="0 0 32 32"><use href="#star" x="1" y="1" width="30" height="30"/></svg></button>
              <button aria-label="Cell matrix"><svg viewBox="0 0 32 32"><g color="#b8a890"><use href="#burst" x="1" y="1" width="15" height="15"/><use href="#burst" x="17" y="1" width="15" height="15"/><use href="#burst" x="17" y="17" width="15" height="15"/></g><g color="#35a0f4"><use href="#burst" x="1" y="17" width="15" height="15"/></g></svg></button>
              <button aria-label="Replace cell"><svg viewBox="0 0 32 32"><g color="#35a0f4"><use href="#burst" x="17" y="1" width="15" height="15"/><use href="#burst" x="1" y="17" width="15" height="15"/></g><use href="#cur" x="17" y="17" width="13" height="14"/></svg></button>
              <button aria-label="Define cell origin"><svg viewBox="0 0 32 32"><use href="#star" x="2" y="5" width="24" height="24"/><ellipse cx="27" cy="6" rx="4" ry="5" fill="#fff" stroke="#111" stroke-width="2"/></svg></button>
              <button aria-label="Identify cell"><svg viewBox="0 0 32 32"><use href="#star" x="2" y="9" width="22" height="22"/><text class="ico mag" x="26" y="17">?</text></svg></button>
              <button aria-label="Line terminator"><svg viewBox="0 0 32 32"><path class="k" d="M7 29L21 14"/><path class="s" d="M28 6L26 18L17 11Z"/></svg></button>
              <button aria-label="Drop cell"><svg viewBox="0 0 32 32"><g color="#35a0f4"><use href="#burst" x="1" y="1" width="14" height="14"/><use href="#burst" x="9" y="1" width="14" height="14"/><use href="#burst" x="17" y="1" width="14" height="14"/><use href="#burst" x="1" y="18" width="14" height="14"/></g><use href="#cur" x="18" y="17" width="13" height="15"/></svg></button>
              <button aria-label="Cell table"><svg viewBox="0 0 32 32"><path d="M3 3H30V31H3Z" fill="#f2f2f2" stroke="#222" stroke-width="2"/><path d="M3 13H30M3 26H30" stroke="#6cb0ea" stroke-width="4"/><path d="M3 17H30M16 3V31" stroke="#222" stroke-width="2"/></svg></button>
            </div></section>
          </div>
        </div>
        <div class="scroll-v"><svg viewBox="0 0 22 25"><path class="cv" d="M6 16L11 10L16 16"/></svg><span class="thumb"></span><svg class="end" viewBox="0 0 22 25"><path class="cv" d="M6 9L11 15L16 9"/></svg></div>
      </div>
    </aside>

    <section class="view">
      <header class="titlebar"><svg viewBox="0 0 22 24"><path d="M2 1H17L21 5V23H2Z" fill="#dde8f4" stroke="#eef4fb" stroke-width="2"/><path d="M6 6H16V17H6Z" fill="#4a4a52"/></svg><h1>View 1, Default</h1>
        <button aria-label="Minimize"><svg viewBox="0 0 44 26"><rect x="14" y="13" width="15" height="5" fill="#fff" stroke="#556" stroke-width="2"/></svg></button><button aria-label="Restore"><svg viewBox="0 0 44 26"><path d="M15 6H29V19H15ZM19 10H25V14H19Z" fill="#fff" fill-rule="evenodd" stroke="#556" stroke-width="2"/></svg></button><button class="close" aria-label="Close view"><svg viewBox="0 0 44 26"><path d="M16 7L28 19M28 7L16 19" stroke="#555" stroke-width="6"/><path d="M16 7L28 19M28 7L16 19" stroke="#fff" stroke-width="4"/></svg></button>
      </header>
      <div class="viewtools">
        <button aria-label="View attributes"><svg viewBox="0 0 28 28"><use href="#win" x="2" y="2" width="20" height="18"/><use href="#list" x="12" y="9" width="14" height="18"/></svg></button><i class="caret"></i>
        <button class="more" aria-label="Display style"><svg viewBox="0 0 28 28"><path d="M2 20L14 5L25 3L26 14L14 24H6Z" fill="#7cc4f2" stroke="#1b7cc8" stroke-width="1.500"/><ellipse cx="12" cy="17" rx="5" ry="4" fill="none" stroke="#fff" stroke-width="2"/><ellipse cx="19" cy="10" rx="4" ry="5" fill="none" stroke="#fff" stroke-width="2"/></svg></button>
        <button aria-label="Brightness"><svg viewBox="0 0 28 28"><path d="M14 1V27M1 14H27M5 5L23 23M23 5L5 23" stroke="#444" stroke-width="1.500"/><circle cx="14" cy="14" r="7.500" fill="#8cc0e0" stroke="#567"/></svg></button><i class="caret"></i>
        <span class="sep"></span>
        <button aria-label="Update view"><svg viewBox="0 0 28 28"><use href="#brush" width="28" height="28"/></svg></button>
        <button aria-label="Zoom in"><svg viewBox="0 0 28 28"><use href="#lens" width="28" height="28"/><path class="k" d="M7 10H15M11 6V14"/></svg></button>
        <button aria-label="Zoom out"><svg viewBox="0 0 28 28"><use href="#lens" width="28" height="28"/><path class="k" d="M7 10H15"/></svg></button>
        <button aria-label="Window area"><svg viewBox="0 0 28 28"><path class="k" stroke-dasharray="3 2" d="M4 3H25V25H4Z"/><use href="#lens" width="24" height="24"/></svg></button>
        <button aria-label="Fit view"><svg viewBox="0 0 28 28"><path d="M2 3H26V25H2Z" fill="#fff" stroke="#445" stroke-width="2"/><path class="k" d="M14 6V22M5 14H23M11 9L14 6L17 9M11 19L14 22L17 19M8 11L5 14L8 17M20 11L23 14L20 17"/></svg></button>
        <button aria-label="Rotate view"><svg viewBox="0 0 28 28"><path d="M13 4Q4 5 3 14L0 14L7 22L13 14H9Q9 10 13 9Z" fill="#5aaef0" stroke="#1c60b8"/><path d="M14 26Q24 24 25 14L28 14L21 5L16 14H19Q19 20 14 21Z" fill="#2a7fd8" stroke="#143c80"/></svg></button>
        <button class="on" aria-label="Pan view"><svg viewBox="0 0 28 28"><path d="M8 24L2 15Q2 12 5 13L7 15V6Q9 3 10 6V12V4Q12 1 13 4V12V3Q15 1 17 4V12V5Q19 3 20 6V14L22 11Q25 10 25 13L20 25H9Z" fill="#eef4ff" stroke="#3b56b0" stroke-width="1.500"/></svg></button>
        <span class="sep"></span>
        <button aria-label="View previous"><svg viewBox="0 0 28 28"><use href="#win" x="1" y="2" width="26" height="24"/><path class="g" d="M9 17Q12 9 20 12V18"/><path d="M7 12V20H14Z" fill="#222"/></svg></button>
        <button aria-label="View next"><svg viewBox="0 0 28 28"><use href="#win" x="1" y="2" width="26" height="24"/><path class="g" d="M19 17Q16 9 8 12V18"/><path d="M21 12V20H14Z" fill="#222"/></svg></button>
        <span class="sep"></span>
        <button aria-label="Copy view"><svg viewBox="0 0 28 28"><use href="#win" x="13" y="1" width="13" height="13"/><use href="#win" x="1" y="15" width="14" height="12"/><use href="#cur" x="17" y="15" width="9" height="11"/></svg></button>
        <button class="more" aria-label="Clip volume"><svg viewBox="0 0 28 28"><path class="b" d="M4 5L12 2L19 5V14L11 18L4 14ZM4 5L11 8L19 5M11 8V18"/><path class="k" d="M8 13L20 25M20 13L9 25"/></svg></button>
        <button aria-label="Clip mask"><svg viewBox="0 0 28 28"><rect class="b" x="3" y="2" width="19" height="19" rx="4"/><path d="M12 12L19 9L26 12V22L19 26L12 22Z" fill="#777" stroke="#444"/><path d="M12 12L19 9L26 12L19 15Z" fill="#ccc"/></svg></button>
      </div>
      <div class="canvas-row">
        <div class="canvas">
          <section class="window cleanup">
            <header><svg viewBox="0 0 24 24"><rect width="24" height="24" rx="3" fill="#0a4468"/><path d="M5 20Q10 14 11 5Q9 15 14 13Q17 10 18 4Q15 12 19 14" fill="none" stroke="#bfe8fb" stroke-width="2"/><circle cx="20" cy="20" r="2" fill="#fff"/></svg><h2>Design File Cleanup</h2>
              <button aria-label="Minimize"><svg viewBox="0 0 18 18"><path d="M2 9H16"/></svg></button><button class="off" aria-label="Maximize"><svg viewBox="0 0 18 18"><path d="M2 2H16V16H2Z"/></svg></button><button aria-label="Close"><svg viewBox="0 0 18 18"><path d="M1 1L17 17M17 1L1 17"/></svg></button></header>
            <nav><a href="#"><u>F</u>ile</a></nav>
            <div class="panel">
              <div class="tabs" role="tablist"><button role="tab" aria-selected="true">General</button><button role="tab">Duplicates *</button><button role="tab">Overlaps</button><button role="tab">Gaps</button></div>
              <div class="fields">
                <div class="left">
                  <div class="row top"><label class="lead" for="pv">Process View:</label><span class="select pv"><select id="pv"><option>1</option></select></span></div>
                  <div class="row"><input type="checkbox" id="cb"><label for="cb">Create Backup</label></div>
                  <div class="row"><input type="checkbox" id="uf" disabled><label class="fence" for="uf">Use <u>F</u>ence</label><span class="select clip"><select disabled aria-label="Fence mode"><option>Clip</option></select></span></div>
                  <div class="row"><input type="checkbox" id="sf"><label for="sf">Save Flags in File</label></div>
                  <div class="row"><label class="lead" for="fs">Flag Size:</label><input class="size" id="fs" type="text" value="1.000"></div>
                </div>
                <fieldset class="actions"><legend>Cleanup Actions</legend>
                  <div><label for="ad">Duplicates:</label><select id="ad"><option>Delete</option></select></div>
                  <div><label for="ao">Overlaps:</label><select id="ao"><option>- none -</option></select></div>
                  <div><label for="ag">Gaps:</label><select id="ag"><option>- none -</option></select></div>
                </fieldset>
                <fieldset class="found"><legend># Found</legend><div>NA</div><div>NA</div><div>NA</div></fieldset>
              </div>
              <fieldset class="overview"><legend>Overview</legend>
                <p>Duplicate: When 2 elements of the same type share the same location and geometry.</p>
                <p>Overlap: When 2 elements partially overlap one another.</p>
                <p>Gap: When an element has an endpoint too far from another element</p>
              </fieldset>
            </div>
            <footer><span class="mark"><button class="default"><u>A</u>pply</button></span><button><u>D</u>one</button></footer>
            <span class="mark-box"></span>
          </section>

          <section class="window element">
            <header><svg viewBox="0 0 20 24"><path d="M3 3L6 8L9 7L9 1Q17 4 13 11L19 19L13 23L7 14Q-1 11 3 3Z" fill="#a8a8a8" stroke="#555" stroke-width="1.500"/></svg><h2>Element ...</h2>
              <button aria-label="Minimize"><svg viewBox="0 0 18 18"><path d="M2 9H16"/></svg></button><button class="off" aria-label="Maximize"><svg viewBox="0 0 18 18"><path d="M2 2H16V16H2Z"/></svg></button><button aria-label="Close"><svg viewBox="0 0 18 18"><path d="M1 1L17 17M17 1L1 17"/></svg></button></header>
            <div class="modes-grid">
              <div class="modes-row">
                <button class="on" aria-label="Individual"><svg viewBox="0 0 28 28"><path class="b" d="M14 4V24M4 14H24"/><circle class="b" cx="14" cy="14" r="5"/></svg></button>
                <button aria-label="Block"><svg viewBox="0 0 28 28"><path class="s" d="M6 8H22V20H6Z"/></svg></button>
                <button aria-label="Shape"><svg viewBox="0 0 28 28"><path class="s" d="M9 9H24L19 19H4Z"/></svg></button>
                <button aria-label="Circle"><svg viewBox="0 0 28 28"><circle class="s" cx="14" cy="14" r="8"/></svg></button>
                <button aria-label="Line"><svg viewBox="0 0 28 28"><path d="M6 21L21 7" stroke="#7d7fa0" stroke-width="2"/></svg></button>
              </div>
              <button class="side" aria-label="Disable handles"><svg viewBox="0 0 32 32"><path d="M8 8H23V24H8Z" fill="#4a88e0" stroke="#1c50b0" stroke-width="2"/><circle cx="16" cy="16" r="13" fill="none" stroke="#e48c8c" stroke-width="4"/><path d="M7 7L25 25" stroke="#a08098" stroke-width="3"/></svg></button>
              <div class="modes-row">
                <button class="on" aria-label="New selection"><svg viewBox="0 0 28 28"><path class="b" d="M13 2V8M3 12H9M5 4L10 9M21 4L16 9M5 20L9 16"/><path d="M12 11L23 19L21 24L15 25Z" fill="#fff" stroke="#3b70c0" stroke-width="1.500"/></svg></button>
                <button aria-label="Add"><svg viewBox="0 0 28 28"><path class="s" d="M12 5H16V12H23V16H16V23H12V16H5V12H12Z"/></svg></button>
                <button aria-label="Subtract"><svg viewBox="0 0 28 28"><path class="s" d="M5 12H23V16H5Z"/></svg></button>
                <button aria-label="Invert"><svg viewBox="0 0 28 28"><path class="s" d="M6 6H21V22H6Z"/><path d="M22 6V23H6Z" fill="#0d5cf4"/></svg></button>
                <button aria-label="Select all"><svg viewBox="0 0 28 28"><use href="#globe" x="4" y="2" width="20" height="20"/><path d="M6 8L11 5L12 12L7 15ZM15 6L20 7L19 12Z" fill="#8fbf3a"/><path d="M12 12L21 20L18 25L13 20Z" fill="#ddd" stroke="#468"/></svg></button>
              </div>
              <button class="side" aria-label="Selection mode"><svg viewBox="0 0 32 32"><path d="M3 1H25V24H3Z" fill="#bbb" stroke="#999" stroke-width="2"/><path d="M11 9L26 24H20L24 31L20 32L16 26L11 29Z" fill="#707070"/></svg></button>
              <i class="caret"></i>
            </div>
          </section>

          <p class="note">các mục tùy chọn</p>
          <svg class="pointer" viewBox="0 0 66 98"><path d="M62 2L5 94" stroke="#ee1c25" stroke-width="3"/><circle cx="4" cy="93" r="4" fill="#ee1c25"/></svg>
          <span class="spot"></span>

          <aside class="banner">
            <div class="brand">
              <div class="contact"><svg viewBox="0 0 12 10"><path d="M0 0H12L6 5ZM0 2L6 7L12 2V10H0Z" fill="#fff"/></svg><span>Email: datsach.com.vn@gmail.com</span><svg viewBox="0 0 10 12"><path d="M3 0Q-2 7 5 12L8 10L6 7L4 8Q2 6 3 4L5 3L4 0Z" fill="#fff"/><path d="M6 1Q8 2 8 5M7 0Q10 2 10 5" stroke="#fff" fill="none"/></svg><span>Hotline: 0363.232.739 - 0817.601.601</span></div>
              <div class="names">
                <div class="logo"><svg viewBox="0 0 36 34"><path d="M36 0H6Q0 0 0 7V20H24V24H0V34H30Q36 34 36 28V14H12V10H36Z" fill="#0a0a96"/><path d="M0 22H24M12 8H36" stroke="#ddd" stroke-width="2"/></svg><div><strong>ĐẤT SẠCH</strong><span>MINH BẠCH - UY TÍN</span></div></div>
                <b>datsach.net</b>
              </div>
            </div>
            <div class="service">Dịch vụ Chuyên test quy hoạch<br>Đào tạo Check in quy hoạch</div>
          </aside>
        </div>
        <div class="scroll-v wide"><svg viewBox="0 0 22 25"><path class="cv" d="M6 16L11 10L16 16"/></svg><span class="thumb"></span><svg class="end" viewBox="0 0 22 25"><path class="cv" d="M6 9L11 15L16 9"/></svg></div>
      </div>
      <div class="scroll-h"><svg viewBox="0 0 16 24"><path class="cv" d="M11 7L5 12L11 17"/></svg><span class="thumb"></span><svg viewBox="0 0 16 24"><path class="cv" d="M5 7L11 12L5 17"/></svg><span class="corner"></span></div>
    </section>
  </div>

  <div class="toolrow bottom">
    <div class="seg first nav">
      <button aria-label="Back"><svg viewBox="0 0 32 32"><circle cx="16" cy="16" r="14.500" fill="#9a9a9a"/><path d="M25 16H9M16 9L9 16L16 23" fill="none" stroke="#fff" stroke-width="3"/></svg></button><i class="caret dim"></i>
      <button aria-label="Forward"><svg viewBox="0 0 32 32"><circle cx="16" cy="16" r="14.500" fill="#9a9a9a"/><path d="M7 16H23M16 9L23 16L16 23" fill="none" stroke="#fff" stroke-width="3"/></svg></button><i class="caret dim"></i>
      <button aria-label="History"><svg viewBox="0 0 32 32"><ellipse cx="17" cy="23" rx="14" ry="7" fill="#e4e4e4" stroke="#bbb" stroke-dasharray="2 2"/><path d="M8 1L13 22L25 17" fill="none" stroke="#aaa" stroke-width="2.500"/></svg></button><i class="caret dim"></i>
      <span class="select views"><svg viewBox="0 0 24 24"><use href="#win" x="1" y="2" width="12" height="12"/><use href="#win" x="9" y="7" width="14" height="13"/></svg><select aria-label="View group"><option>Default Views</option></select></span>
      <span class="sep"></span>
      <button aria-label="Manage view groups"><svg viewBox="0 0 32 32"><use href="#win" x="1" y="3" width="17" height="16"/><use href="#win" x="5" y="14" width="14" height="14"/><use href="#win" x="14" y="8" width="17" height="16"/></svg></button>
      <span class="sep"></span>
      <div class="nums"><button class="on">1</button><button>2</button><button>3</button><button>4</button><button>5</button><button>6</button><button>7</button><button>8</button></div>
    </div>
    <div class="seg draw">
      <svg class="grip"><use href="#grip"/></svg>
      <label for="dist"><svg viewBox="0 0 32 32"><path class="r" d="M7 7V22M25 7V22M8 11H24M12 8L8 11L12 14M20 8L24 11L20 14"/><path class="k" d="M7 25H25"/></svg></label><input id="dist" type="text" value="0.000" class="grey" aria-label="Distance">
    </div>
    <div class="seg draw second">
      <label for="ang"><svg viewBox="0 0 32 32"><path class="k" d="M8 7V20M11 25H25"/><path class="r" d="M10 9Q21 10 23 22"/><path d="M9 8L15 7L13 13ZM23 24L19 18H26Z" fill="#b01818"/></svg></label><input id="ang" type="text" aria-label="Angle">
    </div>
    <div class="seg dims">
      <svg class="grip"><use href="#grip"/></svg>
      <button aria-label="Element dimensioning"><svg viewBox="0 0 32 32"><path class="r" d="M3 3V26M29 3V26M4 9H28M9 5L4 9L9 13M23 5L28 9L23 13"/><path class="k" d="M3 30H29"/><use href="#cur" x="11" y="15" width="10" height="11"/></svg></button>
      <button aria-label="Linear dimension"><svg viewBox="0 0 32 32"><path class="r" d="M3 3V30M29 3V30M4 9H28M9 5L4 9L9 13M23 5L28 9L23 13"/></svg></button>
      <button aria-label="Angular dimension"><svg viewBox="0 0 32 32"><path class="r" d="M3 3V25M5 6L26 28M9 30H30M6 6Q22 9 25 27"/><path d="M3 5L11 3L10 11ZM26 29L20 22L28 20Z" fill="#b01818"/></svg></button>
      <button aria-label="Ordinate dimension"><svg viewBox="0 0 32 32"><path class="r" d="M3 8H21M3 17H16M3 24H14M3 30H16"/><text class="ico blk" x="28" y="10">3</text><text class="ico blk" x="22" y="20">2</text><text class="ico blk" x="22" y="32">0</text></svg></button>
      <button aria-label="Change dimension"><svg viewBox="0 0 32 32"><path class="r" d="M14 16L20 3M25 16L31 3M13 9H31"/><path class="g" d="M2 16V30M16 16V30M3 22H15"/><use href="#cur" x="18" y="15" width="10" height="12"/></svg></button>
      <button aria-label="Match dimension"><svg viewBox="0 0 32 32"><path class="r" d="M17 4V16M29 4V16M17 10H29M3 16V30M15 16V30M3 22H15"/><path class="k" d="M4 12Q5 7 10 7"/><path d="M9 3L14 7L9 11Z" fill="#111"/></svg></button>
      <button aria-label="Dimension space"><svg viewBox="0 0 32 32"><path d="M3 5V30M29 5V30" stroke="#c04828" stroke-width="2"/><path class="r" stroke-dasharray="5 3" d="M6 13H27"/><path d="M6 13L10 9V17ZM26 13L22 9V17Z" fill="#b01818"/></svg></button>
      <button aria-label="Dimension size"><svg viewBox="0 0 32 32"><path class="r" d="M4 3V28M28 3V28M5 9H27M10 5L5 9L10 13M22 5L27 9L22 13"/><path class="k" d="M5 30H27"/><circle class="n" cx="4" cy="29" r="2.500"/><circle class="n" cx="28" cy="29" r="2.500"/></svg></button>
      <button class="more" aria-label="Dimension location"><svg viewBox="0 0 32 32"><path class="r" d="M8 8V30M28 8V30M9 14H27M14 10L9 14L14 18M22 10L27 14L22 18"/><text class="ico blk" x="3" y="10">2</text><text class="ico blk" x="3" y="28">1</text></svg></button>
      <button class="more" aria-label="Dimension angle"><svg viewBox="0 0 32 32"><path class="r" d="M2 29L17 3M12 11Q20 16 20 27M12 11L18 12M16 22L20 27L24 21"/><path class="k" d="M14 29H30"/></svg></button>
      <button class="more" aria-label="Dimension radial"><svg viewBox="0 0 32 32"><circle class="k" cx="11" cy="22" r="7.500"/><path class="r" d="M30 3L18 15M18 8V15H25"/></svg></button>
      <button class="more" aria-label="Baseline dimension"><svg viewBox="0 0 32 32"><path class="r" d="M5 9H27M10 5L5 9L10 13M22 5L27 9L22 13"/><path class="g" d="M4 3V30M24 14V30M29 3V30M5 18H24M5 27H20"/></svg></button>
      <span class="sep"></span>
      <button class="more" aria-label="Place matrix"><svg viewBox="0 0 32 32"><path class="b" d="M5 1V13M0 7H10"/><g fill="none" stroke="#222" stroke-width="2"><ellipse cx="12" cy="12" rx="3" ry="4"/><ellipse cx="20" cy="12" rx="3" ry="4"/><ellipse cx="28" cy="12" rx="3" ry="4"/><ellipse cx="12" cy="24" rx="3" ry="4"/><ellipse cx="20" cy="24" rx="3" ry="4"/><ellipse cx="28" cy="24" rx="3" ry="4"/></g></svg></button>
    </div>
  </div>

  <footer class="status">
    <span class="prompt">Element Selection &gt; Identify element</span>
    <svg class="grip"><use href="#grip"/></svg>
    <span class="msg"><svg viewBox="0 0 36 30"><path d="M14 5L25 27H2Z" fill="#ffe81a" stroke="#a89a10" stroke-width="2"/><path d="M14 12V19M14 21V24" stroke="#111" stroke-width="3"/><path d="M28 2L32 7H24Z" fill="#111"/></svg>Replaced missing RSC font [195] with [STANDARD].</span>
    <span class="cell s"><svg viewBox="0 0 26 26"><path class="g" d="M5 20L14 19L18 6"/><circle class="n" cx="5" cy="20" r="2.500"/><circle class="n" cx="14" cy="20" r="2.500"/><circle class="n" cx="18" cy="6" r="2.500"/></svg></span>
    <span class="cell s"><svg viewBox="0 0 26 26"><path d="M8 13V8Q13 0 18 8V13" fill="none" stroke="#888" stroke-width="3"/><path d="M5 12H21V24H5Z" fill="#b8a81c" stroke="#665"/></svg></span>
    <span class="cell l">Level 10</span>
    <span class="cell m"></span>
    <span class="cell s"></span><span class="cell s"></span><span class="cell s"></span>
    <span class="cell s"><svg viewBox="0 0 26 26"><path d="M5 3H20Q22 8 18 10L20 22H6Q4 17 8 16L6 8Z" fill="#eee" stroke="#99a" stroke-width="2"/></svg></span>
    <span class="cell s"></span><span class="cell s"></span>
    <span class="cell e"><svg viewBox="0 0 26 26"><path d="M4 3H23V24H4Z" fill="#eee" stroke="#aaa" stroke-width="2"/><path d="M8 9L14 7L20 9L18 19H11Z" fill="#ddd" stroke="#999" stroke-width="2"/></svg></span>
  </footer>
</div>
</main>
</body>
</html>
```
FILE: styles.css
```css
*{box-sizing:border-box}
body{margin:0;height:100vh;background:#fff;color:#1a1a1a;font:16px/20px "Liberation Sans",Arial,sans-serif;display:flex}
h1,h2,h3,p,fieldset,legend{margin:0;padding:0;font-weight:400}
fieldset{min-width:0;border:1px solid #dcdcdc}
button,input,select{font:inherit;color:inherit;margin:0;border-radius:0}
button{padding:0;border:0;background:none;display:flex;align-items:center;justify-content:center;flex:none}
a{color:inherit;text-decoration:none}
svg{display:block;flex:none}
.sprite{position:absolute;width:0;height:0}

/* drawing strokes shared by the tool icons */
.b{fill:none;stroke:#2b7bf0;stroke-width:2}
.thin{stroke-width:1}
.w3{stroke-width:3}
.k{fill:none;stroke:#333;stroke-width:2}
.g{fill:none;stroke:#777;stroke-width:2}
.r{fill:none;stroke:#b01818;stroke-width:2}
.o{fill:none;stroke:#6b5428;stroke-width:2}
.n{fill:#fff;stroke:#2b6cf0;stroke-width:2}
.s{fill:#fbfbff;stroke:#3484f2;stroke-width:2}
.h{fill:url(#hatch);stroke:#555;stroke-width:2}
.cv{fill:none;stroke:#555;stroke-width:3}
.ico{font:bold 15px "Liberation Serif",serif;text-anchor:middle;fill:#b01818}
.ico.sm{font-size:12px}
.ico.big{font-size:20px}
.ico.xl{font-size:28px}
.ico.info{font-size:26px;font-style:italic;fill:#1c50e0}
.ico.help{font:bold 24px "Liberation Sans",sans-serif;fill:#fff}
.ico.mag{fill:#c010c0;font-size:20px}
.ico.mag.big{font-size:28px}
.ico.blue{font:12px "Liberation Sans",sans-serif;fill:#2b6cf0}
.blue2,.ico.blue2{fill:#2b7bf0}
.ico.it{font-style:italic}
.ico.blk{font:12px "Liberation Sans",sans-serif;fill:#333}

.sheet{flex:1;min-width:0;margin:7px 11px 15px 12px;padding:14px 12px 12px 13px;border:1px solid #a8a8a8;border-right:2px solid #999;border-bottom:2px solid #999;box-shadow:2px 5px 8px #0004;display:flex}
.app{flex:1;min-width:0;display:flex;flex-direction:column;background:#f1f1f1;overflow:hidden}

.menubar{display:flex;gap:20px;height:20px;padding-left:8px;font-size:15px;line-height:20px;flex:none}
.menubar a{margin-top:-4px}

.toolrow{display:flex;gap:4px;height:50px;flex:none}
.seg{display:flex;align-items:center;background:linear-gradient(#fdfdfd,#f3f3f3 45%,#d9d9d9);border-radius:4px;box-shadow:1px 0 0 #d0d0d0;height:50px;flex:none}
.seg.first{border-radius:0 4px 4px 0}
.seg button svg{width:32px;height:32px}
.seg .grip{width:4px;height:30px}
.sep{width:1px;height:40px;background:#a8a8a8;flex:none}
.caret{width:0;height:0;border:6px solid transparent;border-top:7px solid #111;border-bottom:0;flex:none}
.caret.dim{border-top-color:#777}
.caret.small{border-width:5px;border-top-width:5px;border-bottom:0}
.on{background:linear-gradient(#fbd9a6,#fbb862 50%,#fff19a);outline:2px solid #3d6dc4;outline-offset:-2px}

.select{position:relative;display:flex;align-items:center;background:#e2e2e2;border:2px solid #b8b8b8;height:30px;flex:none}
.select select{appearance:none;border:0;background:none;width:100%;height:100%;padding:0}
.select::after{content:"";position:absolute;right:8px;top:50%;margin-top:-3px;border:6px solid transparent;border-top:7px solid #111;border-bottom:0}
.level{width:188px;margin:0 4px 0 6px}
.attr-icon{width:34px}
.attr-icon+.caret{margin:0 9px 0 14px}
.attr{width:104px;display:flex;align-items:center;padding-left:12px}
.attr svg,.swatch{width:28px;height:30px}
.swatch{border:2px solid #111;background:#fff;height:28px}
.attr span:not(.swatch){width:43px;text-align:center;padding-left:2px}

.split{width:791px;padding-left:3px}
.split button{width:42px}
.split .grip{margin-right:3px}
.split .caret{margin:0 4px 0 5px}

.std{width:497px}
.std button{width:41px}
.std button:first-child{margin-left:-5px}
.std .sep{margin:0 5px 0 4px}
.geo{width:428px;padding:0 3px}
.geo .grip{margin-right:6px}
.geo button,.snap button{flex:1}
.snap{width:478px;padding:0 4px 0 3px}
.snap .grip{margin-right:4px}
.snap .sep{margin:0 4px}
.snap .on{height:40px}
.snap .on svg{height:36px;width:38px}

.work{flex:1;min-height:0;display:flex;border-bottom:2px solid #555}
.tasks{width:283px;border-right:9px solid #adadde;display:flex;flex-direction:column;min-height:0;overflow:hidden;flex:none;background:#f1f1f1}
.dock{display:flex;align-items:center;height:31px;background:linear-gradient(#b9cde2,#e2edf8);padding-right:4px;flex:none}
.dock .cut{flex:1;margin-left:-8px}
.dock button{width:23px}
.dock .caret{margin-right:6px}
.dock svg{width:16px;height:20px}
.taskbox{display:flex;align-items:center;height:36px;margin:7px 5px 0 0;background:#fff;border:2px solid #8a8a8a;border-left:0;border-radius:0 6px 0 0;font-family:"DejaVu Sans",sans-serif;flex:none}
.taskbox svg{width:20px;height:22px;margin-right:7px}
.taskbox span{flex:1}
.taskbox button{width:35px;height:100%;border-left:1px solid #777}
.main-tools{display:grid;grid-template-columns:repeat(6,41px);grid-auto-rows:42px;margin:7px 5px 0 0;padding:5px 0 3px;background:#fff;border:1px solid #d7ebf8;border-left:0;border-radius:0 6px 6px 0;flex:none}
.main-tools button{position:relative;width:38px;height:40px}
.main-tools svg{width:38px;height:38px}
.main-tools b{position:absolute;left:0;bottom:0;width:15px;height:18px;border-right:2px solid #666;border-bottom:2px solid #666;background:#fff9;font:14px/16px "DejaVu Sans",sans-serif;color:#667}
.main-tools i,.tools .more::after{position:absolute;right:-5px;bottom:0;border:4px solid transparent;border-left:5px solid #111;border-right:0}
.lists{flex:1;min-height:0;display:flex;gap:5px;margin:6px 5px 8px 0}
.col{flex:1;min-width:0;display:flex;flex-direction:column;overflow:hidden}
.bar{display:flex;align-items:center;justify-content:flex-start;height:35px;border:2px solid #aaa;border-left:0;border-radius:0 6px 6px 0;background:linear-gradient(#eee,#cfcfcf);font:16px/20px "DejaVu Sans",sans-serif;padding-right:10px;text-align:left;flex:none}
.bar svg{width:20px;height:24px;margin-right:8px}
.bar span,.bar strong{flex:1}
.bar .chev{width:18px;height:14px;margin:0 0 0 8px}
.bar .modes{width:76px;height:26px;margin:0}
.bar.open{margin-top:6px;height:34px;border:0;background:linear-gradient(#e9f6ff,#a9dcf8);border-radius:0 6px 0 0;padding-right:12px}
.sections{flex:1;background:#fff;border-right:1px solid #d7ebf8;border-top:5px solid #fff;min-height:0;overflow:hidden}
.sections section{display:flex;margin-bottom:1px}
.sections h3{width:20px;background:linear-gradient(90deg,#f6f4fa,#d5d1dc);display:flex;align-items:center;justify-content:center;color:#777;font-size:16px}
.tools{display:grid;grid-template-columns:repeat(5,41px);grid-auto-rows:42px;width:214px;border-bottom:1px solid #999}
.tools button{position:relative;width:41px}
.tools svg{width:32px;height:32px}
.tools .more::after{content:"";right:0}
.scroll-v{width:22px;display:flex;flex-direction:column;background:#f1f1f1;flex:none}
.scroll-v svg{width:22px;height:25px}
.scroll-v .end{margin-top:auto}
.scroll-v .thumb{height:64%;background:#cdcdcd}
.scroll-v.wide .thumb{height:37px;margin-top:305px}

.view{flex:1;min-width:0;display:flex;flex-direction:column;background:#bad1ea;border-left:2px solid #445;border-top:3px solid #555;padding-left:11px;border-bottom:2px solid #2ab;padding-bottom:10px}
.titlebar{display:flex;align-items:center;height:45px;margin-left:-11px;padding-left:15px;background:linear-gradient(#9ab5d5,#bad2ec);flex:none}
.titlebar>svg{width:22px;height:24px;margin-right:6px;margin-top:6px}
.titlebar h1{flex:1;font:16px/20px "Open Sans","Noto Sans",sans-serif;padding-top:9px}
.titlebar button{width:46px;height:27px;margin:8px 0 0 4px;border:2px solid #66799a;border-radius:3px;background:linear-gradient(#c9d9ec 45%,#9db5d3 50%,#c0d6ee)}
.titlebar button svg{width:42px;height:25px}
.titlebar .close{border-color:#6a2430;background:linear-gradient(#e6a397 45%,#c03c28 50%,#d66a55)}
.viewtools{display:flex;align-items:center;height:34px;background:#f1f1f1;flex:none}
.viewtools button{width:32px;height:32px;position:relative}
.viewtools .more::after,.dims .more::after{content:"";position:absolute;right:0;bottom:-1px;border:5px solid transparent;border-top:6px solid #111;border-bottom:0}
.viewtools svg{width:26px;height:26px}
.viewtools .caret{margin:0 5px 0 6px}
.viewtools .sep{height:30px;margin:0 4px}
.viewtools .on{background:linear-gradient(90deg,#fff3bc,#fbd15c);outline-color:#26268a}
.canvas-row{flex:1;min-height:0;display:flex}
.canvas{flex:1;min-width:0;position:relative;overflow:hidden;background:#38594c;border-top:1px solid #f8f8f8}
.scroll-h{display:flex;height:25px;background:#f1f1f1;flex:none}
.scroll-h svg{width:16px;height:24px}
.scroll-h .thumb{width:96px;height:22px;margin:1px auto 0 calc(46% - 9px);background:#cdcdcd}
.scroll-h .corner{width:21px;border-left:1px solid #ccc}

/* floating windows over the drawing */
.window{position:absolute;background:#f1f1f1;border:1px solid #888;box-shadow:3px 6px 16px #0007}
.window header{display:flex;align-items:center;background:#fff;height:36px}
.window h2{flex:1;font:16px/20px "Open Sans","Noto Sans",sans-serif;color:#999}
.window header button{width:67px}
.window header button svg{width:16px;height:16px;fill:none;stroke:#888;stroke-width:2}
.window header .off svg{stroke:#e4e4e4}
.cleanup{left:170px;top:58px;width:691px}
.cleanup header>svg{width:23px;height:24px;margin:0 8px 0 4px}
.cleanup nav{height:27px;padding:6px 15px 0;border-bottom:2px solid #bbb;font-size:16px}
.panel{margin:2px 9px 0 10px;border:2px solid #bbb;border-top:0}
.tabs{display:flex;height:44px;margin:0 -2px;border:4px solid #ee1c25;padding-bottom:3px}
.tabs button{flex:1;border-right:1px solid #dcdcdc}
.tabs button:last-child{border:0}
.tabs [aria-selected=true]{flex:none;width:162px;background:#fff;border:0}
.fields{display:flex;padding:32px 0 0 19px;height:218px}
.left{width:299px}
.row{display:flex;align-items:center;height:36px}
.row.top{height:26px;margin-bottom:17px}
.row input[type=checkbox]{appearance:none;width:19px;height:20px;border:2px solid #333;background:#fff;margin-right:7px}
.row input[type=checkbox]:disabled{border-color:#ccc}
.row .lead{width:109px;text-align:right;margin-right:11px}
.row .fence{width:94px;color:#888}
.row .select{height:23px}
.row .select select{padding-left:5px}
.pv{width:55px}
.row .clip{width:126px;background:#ccc;color:#888}
.row .clip::after{border-top-color:#777}
.clip select{opacity:1}
.size{width:120px;height:26px;border:2px solid #aaa;padding:0 6px;background:#fff}
.actions{width:219px;height:138px}
.actions legend{margin-left:8px;padding:0 4px;height:18px;line-height:18px}
.actions div{display:flex;align-items:center;justify-content:flex-end;gap:12px;height:23px;margin:7px 11px 16px 0}
.actions select{appearance:none;width:103px;height:23px;border:2px solid #b5b5b5;background:#e2e2e2;padding:0 4px}
.found{width:94px;height:138px;margin-left:17px;text-align:center}
.found legend{margin-left:6px;padding:0 6px;height:18px;line-height:18px}
.found div{height:23px;line-height:23px;margin:7px 0 16px}
.overview{margin:24px 27px 16px 17px;padding:4px 7px 5px;height:98px}
.overview legend{margin-left:-4px;padding:0 8px;height:18px;line-height:18px}
.overview p{line-height:24px;white-space:nowrap}
.cleanup footer{display:flex;align-items:center;padding:5px 0 3px 221px;gap:32px}
.cleanup footer button{width:93px;height:31px;border:2px solid #b5b5b5;background:#e2e2e2}
.mark{border:4px solid #ee1c25;padding:5px}
.cleanup footer .default{border:3px solid #0a78d8}
.mark-box{position:absolute;left:329px;top:132px;width:230px;height:69px;border:4px solid #ee1c25}

.element{left:873px;top:95px;width:329px;height:149px}
.element header>svg{width:18px;height:24px;margin:0 10px 0 6px}
.element header button:last-child{width:69px}
.modes-grid{display:grid;grid-template-columns:161px 38px auto;column-gap:20px;row-gap:2px;align-items:center;padding:11px 0 0 31px}
.modes-row{grid-column:1;display:flex;align-items:center;height:38px;padding:0 2px;border:2px solid #b0b0b0;border-right:0;border-bottom-color:#fff}
.modes-row button{width:31px;height:31px}
.modes-row svg{width:28px;height:28px}
.side{grid-column:2}
.side svg{width:32px;height:32px}
.modes-grid .caret{grid-column:3;grid-row:2;margin-top:24px}
.note{position:absolute;left:913px;top:5px;font:bold 28px/30px "Liberation Serif",serif;color:#fff200}
.pointer{position:absolute;left:844px;top:32px;width:66px;height:98px}
.spot{position:absolute;left:1291px;top:245px;width:6px;height:6px;border-radius:3px;background:#ee1c25}

.banner{position:absolute;left:419px;top:338px;width:776px;height:101px;padding:4px 7px;background:#fff;display:flex;gap:5px;align-items:flex-start}
.brand,.service{border:4px solid #000;height:91px;background:#fff}
.brand{width:381px;padding-top:4px}
.contact{display:flex;align-items:center;height:28px;margin-right:4px;padding-left:6px;background:#00008c;color:#fff;font:10px/16px Roboto,sans-serif;white-space:nowrap}
.contact svg{width:11px;height:11px;margin-right:3px}
.contact span+svg{margin-left:7px}
.names{display:flex;align-items:center}
.logo{display:flex;align-items:center;gap:4px;width:142px;height:47px;margin:1px 0 0 3px;padding:0 3px;background:#ddd;border:3px solid #fff;border-radius:7px;box-shadow:0 0 4px #888;color:#e8341c}
.logo svg{width:34px;height:34px}
.logo div{display:flex;flex-direction:column;align-items:center;white-space:nowrap}
.logo strong{font:18px/22px "Liberation Serif",serif}
.logo span{font:9px/14px "Liberation Serif",serif}
.names b{font:900 37px/44px Lato,sans-serif;color:#000;margin-left:18px}
.service{flex:1;padding:10px 11px;font:bold 26px/30px "Liberation Serif",serif;color:#000;white-space:nowrap}

.bottom{gap:3px}
.nav{width:603px}
.nav button{width:32px}
.nav .caret{margin:0 9px 0 10px}
.nav .views{width:190px;margin-left:-2px;height:29px}
.views svg{width:24px;height:24px;margin:0 6px 0 2px}
.nav .sep{margin:0 4px 0 5px}
.nav .sep+button{width:40px}
.nums{display:flex;gap:1px}
.nums button{width:20px;height:30px;border-right:2px solid #333;border-bottom:2px solid #aaa;background:#eee}
.nums .on{background:linear-gradient(90deg,#f8a94a,#fff0a0);outline:0}
.draw{width:266px;padding-left:6px}
.draw .grip{margin-right:13px}
.draw label svg{width:32px;height:32px}
.draw input{flex:1;min-width:0;height:27px;border:2px solid #c0c0c8;background:#fff;padding:0 6px;margin:0 8px 0 2px}
.draw .grey{color:#777}
.draw.second{width:268px;padding:0 16px 0 8px}
.dims{width:561px;padding:0 6px 0 4px}
.dims .grip{margin-right:3px}
.dims button{flex:1;height:46px;position:relative}
.dims .more::after{border-top:0;border-bottom:6px solid #111;bottom:0;right:0}

.status{display:flex;align-items:stretch;height:29px;border-top:2px solid #b5b5b5;line-height:20px;flex:none}
.prompt{width:201px;margin-right:15px;overflow:hidden;white-space:nowrap;text-indent:-10px;padding-top:9px;font-size:15px}
.status .grip{width:4px;height:27px}
.msg{flex:1;display:flex;border-left:2px solid #aaa;margin-left:5px;padding-top:9px;white-space:nowrap}
.msg svg{width:36px;height:28px;margin:-8px 1px 0}
.cell{border-left:2px solid #aaa;border-top:2px solid #ccc;padding-top:7px}
.cell svg{width:24px;height:22px;margin:-4px auto 0}
.s{width:41px}
.status .s{fill:none}
.l{width:171px;padding-left:2px}
.m{width:156px}
.e{width:28px}
```
